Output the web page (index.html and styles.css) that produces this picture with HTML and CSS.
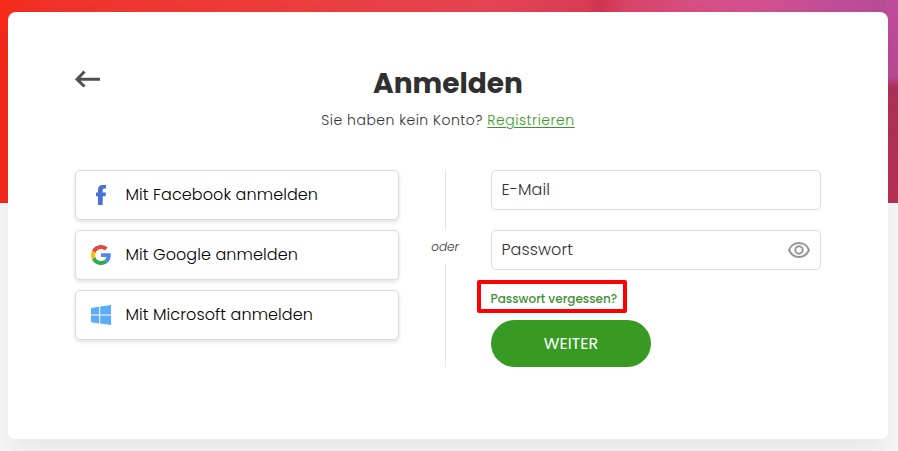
FILE: index.html
```
<!DOCTYPE html>
<html lang="de">
<head>
<meta charset="UTF-8">
<meta name="viewport" content="width=device-width, initial-scale=1.0">
<title>Anmelden</title>
<link rel="stylesheet" href="styles.css">
</head>
<body>
<main class="card">
    <header class="card-header">
        <a href="#" class="back" aria-label="Zurück">
            <svg width="26" height="18" viewBox="0 0 26 18" fill="none" stroke="#505050" stroke-width="3">
                <path d="M2 9.3H25M9.5 1.5L2 9.3L9.5 16.5"/>
            </svg>
        </a>
        <h1>Anmelden</h1>
        <p class="register">Sie haben kein Konto? <a href="#">Registrieren</a></p>
    </header>

    <div class="columns">
        <div class="social">
            <button class="social-btn facebook">
                <svg width="20" height="20" viewBox="0 0 20 20">
                    <path fill="#4871d1" d="M7 20V11.2H5V7.4h2V5c0-3.4 1.6-5 4.6-5H15v3.4h-1.6c-1.3 0-1.7.6-1.7 1.7v2.3H15l-.5 3.8h-2.8V20z"/>
                </svg>
                <span>Mit Facebook anmelden</span>
            </button>
            <button class="social-btn google">
                <svg width="20" height="20" viewBox="0 0 48 48">
                    <path fill="#e04a3f" d="M24 9.5c3.54 0 6.71 1.22 9.21 3.6l6.85-6.85C35.9 2.38 30.47 0 24 0 14.62 0 6.51 5.38 2.56 13.22l7.98 6.19C12.43 13.72 17.74 9.5 24 9.5z"/>
                    <path fill="#5087ec" d="M47.5 24.55c0-1.57-.15-3.09-.38-4.55H24v9.02h12.94c-.58 2.96-2.26 5.48-4.78 7.18l7.73 6c4.51-4.18 7.61-10.36 7.61-17.65z"/>
                    <path fill="#fbbc05" d="M10.53 28.59c-.48-1.45-.76-2.99-.76-4.59s.27-3.14.76-4.59l-7.98-6.19C.92 16.46 0 20.12 0 24s.92 7.54 2.56 10.78z"/>
                    <path fill="#2eac50" d="M24 48c6.48 0 11.93-2.13 15.89-5.81l-7.73-6c-2.15 1.45-4.92 2.3-8.16 2.3-6.26 0-11.57-4.22-13.47-9.91l-7.98 6.19C6.51 42.62 14.62 48 24 48z"/>
                </svg>
                <span>Mit Google anmelden</span>
            </button>
            <button class="social-btn microsoft">
                <svg width="20" height="20" viewBox="0 0 20 20" fill="#5badfb">
                    <path d="M0 2.9L8.2 1.7V9.5H0zM9.2 1.5L20 0V9.5H9.2zM0 10.5H8.2V18.4L0 17.2zM9.2 10.5H20V20L9.2 18.5z"/>
                </svg>
                <span>Mit Microsoft anmelden</span>
            </button>
        </div>

        <div class="divider"><span>oder</span></div>

        <form class="login">
            <input type="text" class="email" placeholder="E-Mail">
            <div class="password">
                <input type="password" placeholder="Passwort">
                <svg class="eye" width="22" height="16" viewBox="0 0 22 16" fill="none" stroke="#999" stroke-width="2">
                    <path d="M1 8C3 3.4 6.6 1.1 11 1.1S19 3.4 21 8C19 12.6 15.4 14.9 11 14.9S3 12.6 1 8z"/>
                    <circle cx="11" cy="8" r="3.7"/>
                </svg>
            </div>
            <div class="forgot"><a href="#">Passwort vergessen?</a></div>
            <button type="button" class="submit"><span>WEITER</span></button>
        </form>
    </div>
</main>
</body>
</html>
```
FILE: styles.css
```
* {
    box-sizing: border-box;
}
body {
    margin: 0;
    padding: 12px 10px 12px 8px;
    height: 451px;
    overflow: hidden;
    font-family: Poppins, Inter, sans-serif;
    font-feature-settings: "cv11";
    color: #333;
    background-color: #f8f8f8;
    background-image:
        linear-gradient(#bf4b9b, #bd4b98 76px, #b03158 88px, #b83052),
        linear-gradient(90deg, #f52a18, #f0332c 60px, #ec3e3d 300px, #e34455 500px, #da3c53 585px, #d13550 600px, #d84465 625px, #d64e83 690px, #d1508f 760px, #bd4d98 850px, #b64a94);
    background-repeat: no-repeat;
    background-position: right top, left top;
    background-size: 12px 203px, 100% 203px;
}
.card {
    height: 427px;
    padding: 0 67px;
    background-color: #fff;
    border-radius: 8px;
    box-shadow: 0 15px 30px rgba(0, 0, 0, 0.07);
}
.card-header {
    display: grid;
    grid-template-columns: 26px 1fr 26px;
    grid-template-rows: 44px 26px;
    padding-top: 50px;
    height: 158px;
    text-align: center;
}
.back {
    padding-top: 8px;
}
.back svg {
    display: block;
}
h1 {
    margin: 0;
    font-size: 28px;
    line-height: 44px;
    font-weight: 700;
    color: #303030;
}
.register {
    grid-column: 1 / -1;
    margin: 1px 0 0;
    font-size: 14px;
    line-height: 26px;
    font-weight: 300;
    letter-spacing: 0.5px;
}
.register a {
    color: #379a22;
    text-underline-offset: 2px;
}
.columns {
    display: grid;
    grid-template-columns: 324px 92px 330px;
    height: 197px;
}
.social {
    display: flex;
    flex-direction: column;
    gap: 10px;
}
.social-btn {
    display: flex;
    align-items: center;
    gap: 14.5px;
    height: 50px;
    padding: 0 15px;
    background-color: #fff;
    border: 1px solid #d9dcdf;
    border-radius: 5px;
    box-shadow: 0 2px 4px rgba(0, 0, 0, 0.12);
    font: inherit;
    font-size: 16px;
    font-weight: 300;
    letter-spacing: 0.08px;
    color: #000;
    cursor: pointer;
}
.social-btn span {
    padding-bottom: 2px;
}
.divider {
    display: flex;
    flex-direction: column;
    align-items: center;
    font-size: 12px;
    font-style: italic;
    font-weight: 300;
    line-height: 34px;
}
.divider::before,
.divider::after {
    content: "";
    width: 1px;
    background-color: #e3e5e7;
}
.divider::before {
    height: 60px;
}
.divider::after {
    flex: 1;
}
.login {
    display: flex;
    flex-direction: column;
}
.login input {
    width: 100%;
    height: 40px;
    padding: 0 10px 2px 9.5px;
    border: 1px solid #d9dede;
    border-radius: 5px;
    background-color: #fff;
    font: inherit;
    font-size: 16px;
    font-weight: 300;
    letter-spacing: 0.08px;
}
.login input::placeholder {
    color: #333;
    opacity: 1;
}
.email {
    margin-bottom: 20px;
}
.password {
    position: relative;
}
.eye {
    position: absolute;
    top: 12px;
    right: 11px;
}
.forgot {
    width: 150px;
    height: 33px;
    margin: 10px 0 7px -14px;
    padding-left: 9.5px;
    border: 4px solid #fe0000;
    border-radius: 2px;
    font-size: 12px;
    line-height: 30px;
    font-weight: 500;
    white-space: nowrap;
}
.forgot a {
    color: #3f9132;
    text-decoration: none;
}
.submit {
    width: 160px;
    height: 47px;
    border: none;
    border-radius: 24px;
    background-color: #379a22;
    color: #fff;
    font: inherit;
    font-size: 16px;
    cursor: pointer;
}
```
